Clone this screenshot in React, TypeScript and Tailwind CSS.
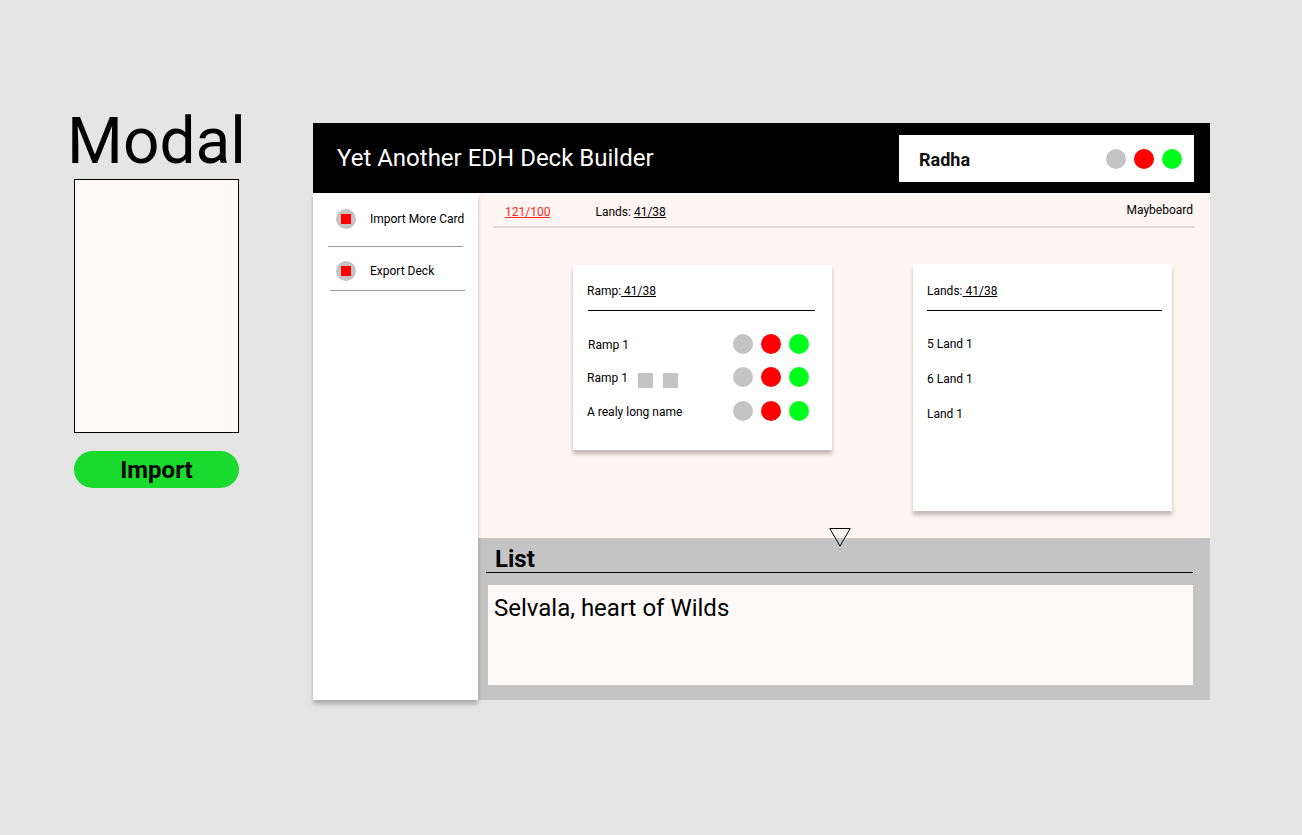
import React from "react";

const font = { fontFamily: "Roboto, 'Noto Sans', sans-serif" };

// colour dots used in the header and ramp rows
const Dots = () => (
  <div className="flex items-center gap-2">
    <span className="w-5 h-5 rounded-full bg-[#c4c4c4]" />
    <span className="w-5 h-5 rounded-full bg-[#ff0000]" />
    <span className="w-5 h-5 rounded-full bg-[#00ff1a]" />
  </div>
);

const SideItem = ({ label, cls }: { label: string; cls: string }) => (
  <div className={`flex items-center pl-[23px] ${cls}`}>
    <span className="w-5 h-5 rounded-full bg-[#c4c4c4] flex items-center justify-center">
      <span className="w-[10px] h-[10px] bg-[#ff0000]" />
    </span>
    <span className="ml-[14px] text-[12px] leading-[14px] text-black">{label}</span>
  </div>
);

const rampRows = [
  { name: "Ramp 1", squares: false, cls: "" },
  { name: "Ramp 1", squares: true, cls: "" },
  { name: "A realy long name", squares: false, cls: "mt-px" },
];

const landRows = ["5 Land 1", "6 Land 1", "Land 1"];

export default function App() {
  return (
    <div className="min-h-[835px] w-full bg-[#e5e5e5] flex items-start" style={font}>
      {/* MODAL */}
      <div className="ml-[74px] mt-[109px] w-[165px] flex flex-col items-center">
        <div className="text-[64px] leading-[65px] text-black whitespace-nowrap">Modal</div>
        <div className="mt-[5px] w-[165px] h-[254px] border border-black bg-[#fffaf9]" />
        <button className="mt-[18px] w-[165px] h-[37px] rounded-full bg-[#18db2e] text-[24px] font-bold leading-none text-black">
          Import
        </button>
      </div>

      {/* APP WINDOW */}
      <div className="ml-[74px] mt-[123px] w-[897px] flex flex-col">
        {/* HEADER */}
        <div className="h-[70px] bg-black flex items-center justify-between pl-[24px] pr-[16px]">
          <div className="text-[24px] leading-[28px] text-white">Yet Another EDH Deck Builder</div>
          <div className="w-[295px] h-[47px] bg-white flex items-center justify-between pl-[20px] pr-[12px] mt-[1px]">
            <span className="text-[18px] font-bold text-[#111] mt-[2px]">Radha</span>
            <Dots />
          </div>
        </div>

        <div className="flex h-[507px]">
          {/* SIDEBAR */}
          <div className="w-[165px] bg-white shadow-[0_4px_4px_rgba(0,0,0,0.25)] relative z-10 flex flex-col">
            <SideItem label="Import More Card" cls="h-[53px] pb-[2px]" />
            <div className="ml-[15px] w-[135px] h-px bg-[#9e9e9e]" />
            <SideItem label="Export Deck" cls="h-[43px] pt-[4px]" />
            <div className="ml-[17px] w-[135px] h-px bg-[#9e9e9e]" />
          </div>

          {/* MAIN */}
          <div className="flex-1 flex flex-col">
            <div className="h-[345px] bg-[#fff5f3] flex flex-col">
              {/* TOP BAR */}
              <div className="mx-[15px] h-[35px] border-b-2 border-[#e3d9d7] flex items-start justify-between text-[12px] leading-[14px] text-black">
                <div className="flex pt-[12px] pl-[12px]">
                  <span className="underline text-[#ff2424]">121/100</span>
                  <span className="ml-[45px]">
                    Lands: <span className="underline">41/38</span>
                  </span>
                </div>
                <span className="pt-[10px] pr-[2px]">Maybeboard</span>
              </div>

              {/* CARDS */}
              <div className="flex items-start pl-[95px] gap-[81px] mt-[37px]">
                <div className="w-[259px] h-[185px] bg-white shadow-[0_4px_4px_rgba(0,0,0,0.25)] flex flex-col pt-[19px] text-[12px] leading-[14px] text-black">
                  <div className="pl-[14px]">
                    Ramp:<span className="underline"> 41/38</span>
                  </div>
                  <div className="mt-[12px] ml-[15px] mr-[17px] h-px bg-black" />
                  <div className="mt-[23px] flex flex-col gap-[13px] pl-[14px] pr-[23px]">
                    {rampRows.map((r, i) => (
                      <div key={i} className={`flex items-center justify-between h-5 ${r.cls}`}>
                        <div className="flex items-center">
                          <span className={i === 0 ? "ml-[1px] mt-[1px]" : "mt-[2px]"}>{r.name}</span>
                          {r.squares && (
                            <div className="flex items-center gap-[10px] ml-[10px] mt-[6px]">
                              <span className="w-[15px] h-[15px] bg-[#c4c4c4]" />
                              <span className="w-[15px] h-[15px] bg-[#c4c4c4]" />
                            </div>
                          )}
                        </div>
                        <Dots />
                      </div>
                    ))}
                  </div>
                </div>

                <div className="w-[259px] h-[247px] -mt-px bg-white shadow-[0_4px_4px_rgba(0,0,0,0.25)] flex flex-col pt-[20px] text-[12px] leading-[14px] text-black">
                  <div className="pl-[14px]">
                    Lands:<span className="underline"> 41/38</span>
                  </div>
                  <div className="mt-[12px] ml-[14px] mr-[10px] h-px bg-black" />
                  <div className="mt-[26px] flex flex-col gap-[21px] pl-[14px]">
                    {landRows.map((l) => (
                      <div key={l} className="h-[14px]">{l}</div>
                    ))}
                  </div>
                </div>
              </div>
            </div>

            {/* LIST */}
            <div className="relative flex-1 bg-[#c4c4c4] pl-[8px] pr-[17px] flex flex-col">
              <svg
                className="absolute left-[351px] -top-[10px]"
                width="22"
                height="19"
                viewBox="0 0 22 19"
              >
                <polygon points="0.8,0.5 21.2,0.5 11,18.2" fill="none" stroke="#000" strokeWidth="1" />
              </svg>
              <div className="border-b border-black pt-[8px] pl-[9px]">
                <span className="block text-[24px] leading-[26px] font-bold text-black">List</span>
              </div>
              <div className="mt-[12px] ml-[2px] h-[100px] bg-[#fffaf9] pt-[9px] pl-[6px] text-[24px] leading-[28px] text-black">
                Selvala, heart of Wilds
              </div>
            </div>
          </div>
        </div>
      </div>
    </div>
  );
}
